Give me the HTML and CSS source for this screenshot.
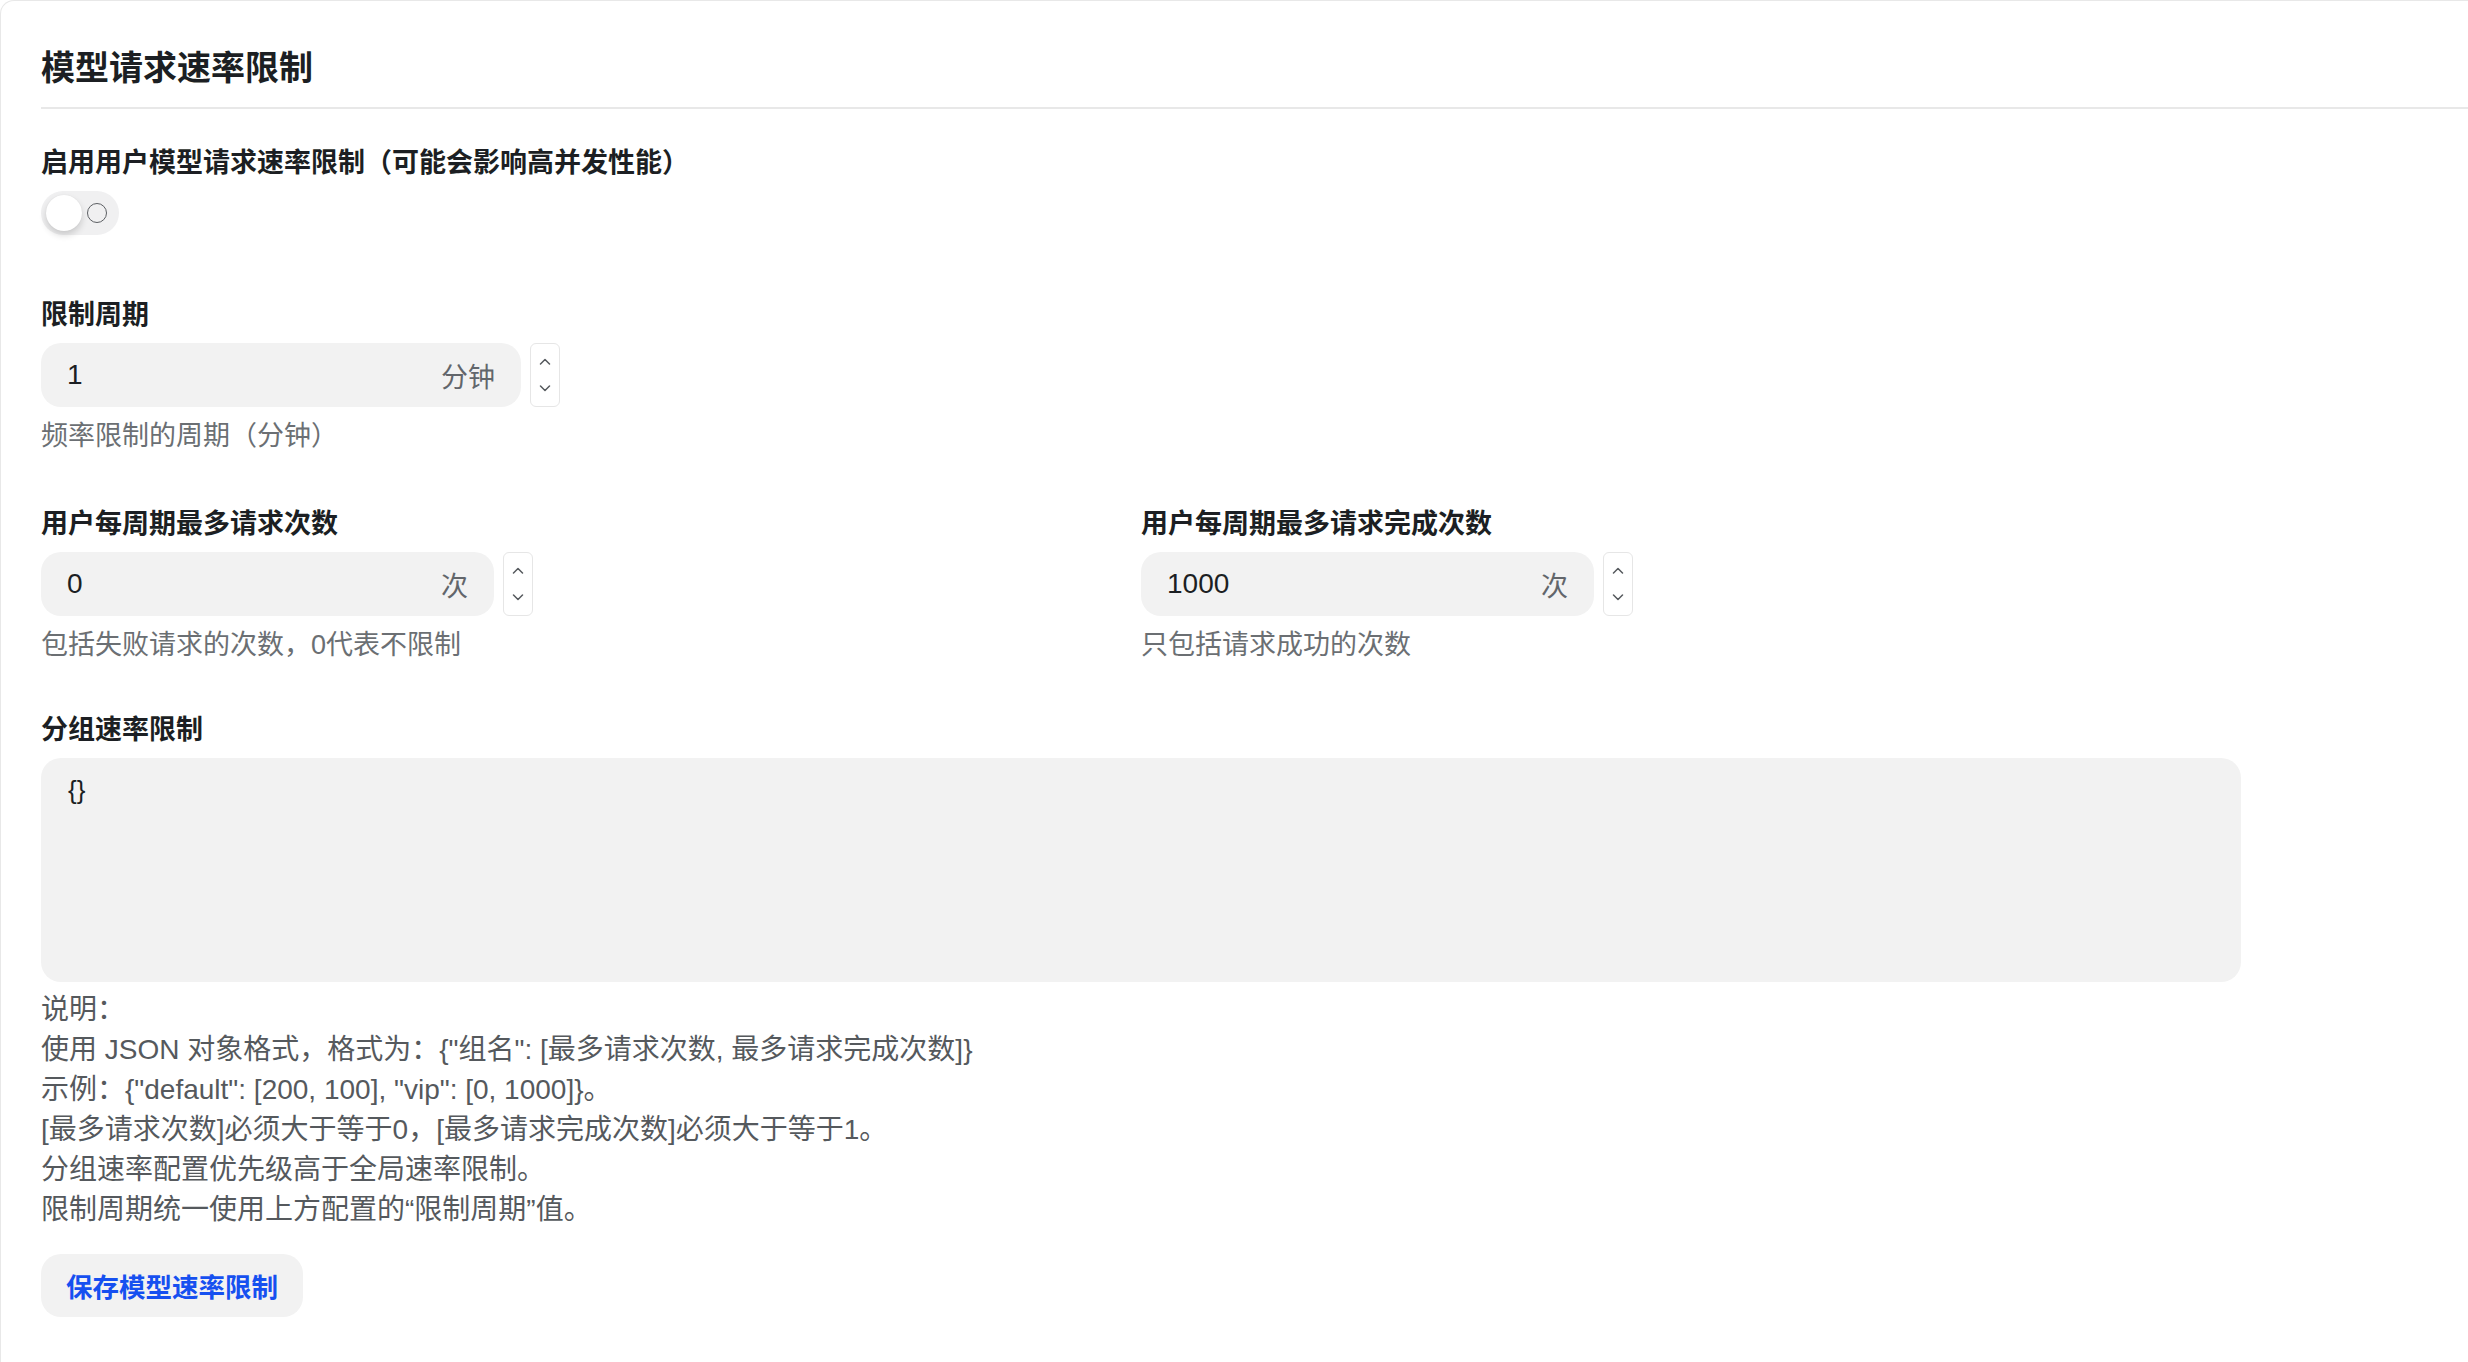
FILE: index.html
```html
<!DOCTYPE html>
<html lang="zh-CN">
<head>
<meta charset="utf-8">
<title>模型请求速率限制</title>
<link rel="stylesheet" href="styles.css">
</head>
<body>
<div class="card">
  <div class="card-header">
    <h2 class="title">模型请求速率限制</h2>
  </div>
  <div class="form">
    <div class="field field-switch">
      <div class="label">启用用户模型请求速率限制（可能会影响高并发性能）</div>
      <div class="switch">
        <span class="knob"></span>
        <span class="off-mark"></span>
      </div>
    </div>

    <div class="field">
      <div class="label">限制周期</div>
      <div class="number">
        <div class="input"><span class="value">1</span><span class="suffix">分钟</span></div>
        <div class="spinner">
          <span class="step"><svg width="12" height="7" viewBox="0 0 12 7"><path d="M1.5 6 L6 1.5 L10.5 6"/></svg></span>
          <span class="step"><svg width="12" height="7" viewBox="0 0 12 7"><path d="M1.5 1 L6 5.5 L10.5 1"/></svg></span>
        </div>
      </div>
      <div class="help">频率限制的周期（分钟）</div>
    </div>

    <div class="row">
      <div class="field">
        <div class="label">用户每周期最多请求次数</div>
        <div class="number">
          <div class="input"><span class="value">0</span><span class="suffix">次</span></div>
          <div class="spinner">
            <span class="step"><svg width="12" height="7" viewBox="0 0 12 7"><path d="M1.5 6 L6 1.5 L10.5 6"/></svg></span>
            <span class="step"><svg width="12" height="7" viewBox="0 0 12 7"><path d="M1.5 1 L6 5.5 L10.5 1"/></svg></span>
          </div>
        </div>
        <div class="help">包括失败请求的次数，0代表不限制</div>
      </div>
      <div class="field">
        <div class="label">用户每周期最多请求完成次数</div>
        <div class="number">
          <div class="input"><span class="value">1000</span><span class="suffix">次</span></div>
          <div class="spinner">
            <span class="step"><svg width="12" height="7" viewBox="0 0 12 7"><path d="M1.5 6 L6 1.5 L10.5 6"/></svg></span>
            <span class="step"><svg width="12" height="7" viewBox="0 0 12 7"><path d="M1.5 1 L6 5.5 L10.5 1"/></svg></span>
          </div>
        </div>
        <div class="help">只包括请求成功的次数</div>
      </div>
    </div>

    <div class="field field-last">
      <div class="label">分组速率限制</div>
      <div class="textarea">{}</div>
      <div class="notes">
        <div>说明：</div>
        <div>使用 JSON 对象格式，格式为：{"组名": [最多请求次数, 最多请求完成次数]}</div>
        <div>示例：{"default": [200, 100], "vip": [0, 1000]}。</div>
        <div>[最多请求次数]必须大于等于0，[最多请求完成次数]必须大于等于1。</div>
        <div>分组速率配置优先级高于全局速率限制。</div>
        <div>限制周期统一使用上方配置的“限制周期”值。</div>
      </div>
    </div>

    <button class="btn" type="button">保存模型速率限制</button>
  </div>
</div>
</body>
</html>
```

FILE: styles.css
```css
* {
  box-sizing: border-box;
}

html, body {
  margin: 0;
  padding: 0;
  background: #ffffff;
}

body {
  font-family: "Liberation Sans", "Noto Sans CJK SC", sans-serif;
  color: #1c1f23;
  overflow: hidden;
}

.card {
  width: 100%;
  min-height: 1362px;
  border-top: 1px solid #e8e8e8;
  border-left: 1px solid #e8e8e8;
  border-top-left-radius: 14px;
  padding-left: 40px;
  background: #ffffff;
}

.card-header {
  padding: 45px 0 17px;
  border-bottom: 2px solid #e8e8e8;
}

.title {
  margin: 0;
  font-size: 34px;
  line-height: 44px;
  font-weight: 700;
  color: #1c1f23;
}

.form {
  width: 2200px;
  padding-top: 36px;
}

.label {
  font-size: 27px;
  line-height: 36px;
  font-weight: 700;
  color: #1c1f23;
  margin-bottom: 10px;
}

.field {
  margin-bottom: 52px;
}

.row .field {
  margin-bottom: 49px;
}

.field-switch {
  margin-bottom: 62px;
}

.field-last {
  margin-bottom: 0;
}

.switch {
  margin-top: 1px;
  width: 78px;
  height: 44px;
  border-radius: 22px;
  background: #f0f0f1;
  display: flex;
  align-items: center;
  padding-left: 5px;
  gap: 5px;
}

.knob {
  width: 36px;
  height: 36px;
  border-radius: 50%;
  background: #ffffff;
  box-shadow: 0 4px 7px rgba(0, 0, 0, 0.16), 0 0 1px rgba(0, 0, 0, 0.1);
}

.off-mark {
  width: 20px;
  height: 20px;
  border-radius: 50%;
  border: 1.8px solid #5c5f63;
}

.number {
  display: flex;
  align-items: stretch;
}

.input {
  display: flex;
  align-items: center;
  height: 64px;
  padding: 0 26px;
  background: #f2f2f2;
  border-radius: 20px;
  font-size: 27px;
}

.value {
  width: 374px;
  color: #1c1f23;
  font-size: 28px;
}

.suffix {
  color: #62666b;
}

.spinner {
  margin-left: 9px;
  width: 30px;
  display: flex;
  flex-direction: column;
  border: 1.5px solid #e6e6e6;
  border-radius: 6px;
  padding: 4px 0;
}

.step {
  flex: 1;
  display: flex;
  align-items: center;
  justify-content: center;
}

.step svg path {
  fill: none;
  stroke: #55595d;
  stroke-width: 1.5;
  stroke-linecap: round;
  stroke-linejoin: round;
}

.help {
  margin-top: 11px;
  font-size: 27px;
  line-height: 36px;
  color: #6b6f73;
}

.row {
  display: grid;
  grid-template-columns: 1100px 1100px;
}

.textarea {
  width: 2200px;
  height: 224px;
  background: #f2f2f2;
  border-radius: 20px;
  padding: 14px 27px;
  font-size: 26px;
  line-height: 36px;
  color: #1c1f23;
}

.notes {
  margin-top: 8px;
  font-size: 28px;
  line-height: 40px;
  color: #55595d;
}

.btn {
  margin-top: 24px;
  height: 63px;
  padding: 0 25px;
  border: none;
  border-radius: 20px;
  background: #f2f2f2;
  color: #1650f0;
  font-family: "Liberation Sans", "Noto Sans CJK SC", sans-serif;
  font-size: 26.5px;
  font-weight: 700;
  cursor: pointer;
}
```
